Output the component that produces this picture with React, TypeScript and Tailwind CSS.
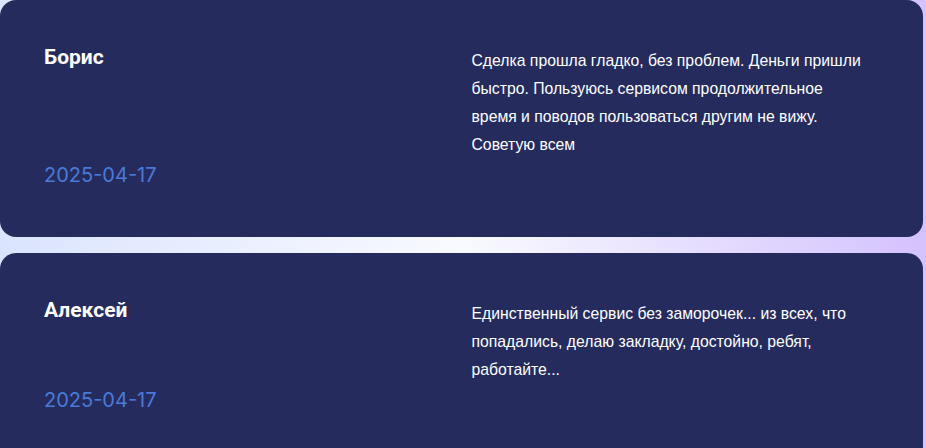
const reviews = [
  {
    name: "Борис",
    date: "2025-04-17",
    text: "Сделка прошла гладко, без проблем. Деньги пришли быстро. Пользуюсь сервисом продолжительное время и поводов пользоваться другим не вижу. Советую всем",
  },
  {
    name: "Алексей",
    date: "2025-04-17",
    text: "Единственный сервис без заморочек... из всех, что попадались, делаю закладку, достойно, ребят, работайте...",
  },
];

const ReviewCard = ({ name, date, text }: (typeof reviews)[number]) => (
  <div className="grid grid-cols-2 gap-5 rounded-2xl bg-[#252c5d] px-11 pt-[47px] pb-[47px]">
    {/* Author + date */}
    <div className="flex flex-col justify-between">
      <p className="font-['Roboto',sans-serif] text-[21px] font-bold leading-5 text-white">
        {name}
      </p>
      <p className="font-['Inter',sans-serif] text-[20px] font-normal leading-[30px] text-[#4a7ad9]">
        {date}
      </p>
    </div>
    {/* Review text */}
    <p className="pr-2 pb-[31px] font-['Liberation_Sans',sans-serif] text-[15.75px] leading-7 text-white">
      {text}
    </p>
  </div>
);

export default function App() {
  return (
    <div className="h-[448px] w-[926px] overflow-hidden bg-linear-to-r from-[#dbe4fe] via-[#f9faff] to-[#d4c2fd] pr-[3px]">
      <div className="flex flex-col gap-4">
        {reviews.map((r) => (
          <ReviewCard key={r.name} {...r} />
        ))}
      </div>
    </div>
  );
}
